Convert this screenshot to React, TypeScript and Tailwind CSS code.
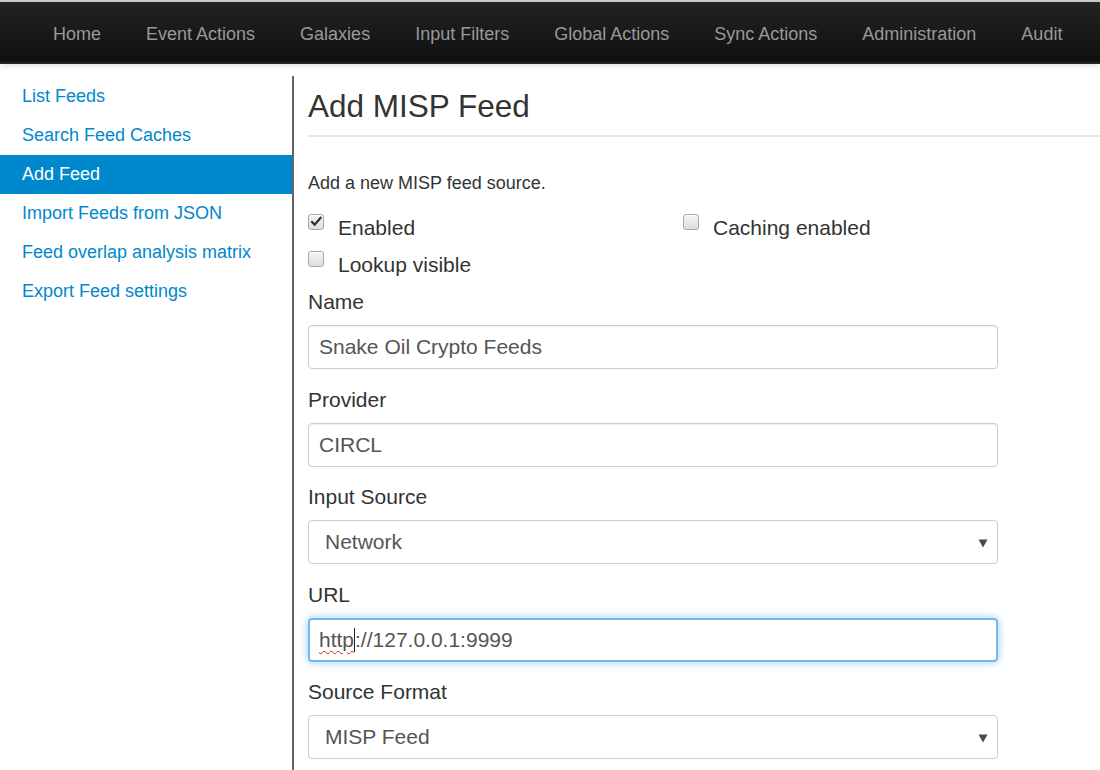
import React from "react";

const font = { fontFamily: '"Liberation Sans", Arial, Helvetica, sans-serif' };

function Checkbox({ checked }: { checked?: boolean }) {
  return (
    <div className="relative w-[16px] h-[16px] rounded-[3px] border border-[#a8a8a8] bg-gradient-to-b from-[#f4f4f4] to-[#dedede] shadow-[inset_0_1px_0_#fff] shrink-0">
      {checked && (
        <svg viewBox="0 0 16 16" className="absolute left-[1px] top-[0px] w-[13px] h-[13px]">
          <path d="M2.5 8.5 L5.8 11.8 L13 3.5" fill="none" stroke="#2b2b2b" strokeWidth="2.6" strokeLinecap="square" />
        </svg>
      )}
    </div>
  );
}

function Arrow() {
  return (
    <svg viewBox="0 0 10 9" className="absolute right-[9px] top-[18px] w-[10px] h-[9px]">
      <path d="M0.5 0.5 L9.5 0.5 L5 8.5 Z" fill="#4a4a4a" />
    </svg>
  );
}

export default function App() {
  const nav = ["Home", "Event Actions", "Galaxies", "Input Filters", "Global Actions", "Sync Actions", "Administration", "Audit"];
  const side = ["List Feeds", "Search Feed Caches", "Add Feed", "Import Feeds from JSON", "Feed overlap analysis matrix", "Export Feed settings"];
  return (
    <div style={font} className="w-[1100px] h-[770px] overflow-hidden bg-white text-[#333]">
      <div className="h-[64px] border-t-2 border-[#c8c8c8] bg-gradient-to-b from-[#232323] to-[#101010] border-b-2 border-b-[#262626] shadow-[0_2px_6px_rgba(0,0,0,0.12)] flex items-center pt-[3px] pl-[53px] gap-[45px]">
        {nav.map((n) => (
          <span key={n} className="text-[18px] text-[#999] leading-none">{n}</span>
        ))}
      </div>
      <div className="flex mt-[12px]">
        <div className="w-[292px] shrink-0 pt-[1px]">
          {side.map((s) => (
            <div
              key={s}
              className={
                "h-[39px] flex items-center pl-[22px] text-[18px] " +
                (s === "Add Feed" ? "bg-[#0088cc] text-white" : "text-[#0088cc]")
              }
            >
              {s}
            </div>
          ))}
        </div>
        <div className="flex-1 border-l-2 border-[#666] pl-[14px] h-[700px]">
          <h1 className="text-[31.5px] leading-[40px] mt-[10px] text-[#333]">Add MISP Feed</h1>
          <div className="h-[2px] bg-[#e8e8e8] mt-[9px]" />
          <p className="text-[18px] leading-[24px] mt-[34px]">Add a new MISP feed source.</p>
          <div className="flex mt-[18px]">
            <div className="w-[375px] flex gap-[14px] h-[30px]">
              <div className="mt-[1px]"><Checkbox checked /></div>
              <span className="text-[21px] leading-[30px]">Enabled</span>
            </div>
            <div className="flex gap-[14px] h-[30px]">
              <div className="mt-[1px]"><Checkbox /></div>
              <span className="text-[21px] leading-[30px]">Caching enabled</span>
            </div>
          </div>
          <div className="flex gap-[14px] h-[30px] mt-[7px]">
            <div className="mt-[1px]"><Checkbox /></div>
            <span className="text-[21px] leading-[30px]">Lookup visible</span>
          </div>

          <div className="w-[690px] mt-[7px]">
            <div className="text-[21px] leading-[30px]">Name</div>
            <div className="mt-[8px] h-[44px] rounded-[4px] border border-[#cccccc] shadow-[inset_0_1px_1px_rgba(0,0,0,0.075)] flex items-center pl-[10px] text-[21px] text-[#555]">
              Snake Oil Crypto Feeds
            </div>

            <div className="text-[21px] leading-[30px] mt-[16px]">Provider</div>
            <div className="mt-[8px] h-[44px] rounded-[4px] border border-[#cccccc] shadow-[inset_0_1px_1px_rgba(0,0,0,0.075)] flex items-center pl-[10px] text-[21px] text-[#555]">
              CIRCL
            </div>

            <div className="text-[21px] leading-[30px] mt-[15px]">Input Source</div>
            <div className="relative mt-[8px] h-[44px] rounded-[4px] border border-[#cccccc] bg-white flex items-center pl-[16px] text-[21px] text-[#555]">
              Network
              <Arrow />
            </div>

            <div className="text-[21px] leading-[30px] mt-[16px]">URL</div>
            <div className="mt-[8px] h-[44px] rounded-[4px] border-2 border-[#74b7ec] shadow-[0_0_8px_rgba(102,175,233,0.7)] flex items-center pl-[9px] text-[21px] text-[#555]">
              <span className="underline decoration-wavy decoration-[#e02020] decoration-[1px] underline-offset-[3px]">http</span>
              <span className="inline-block w-[1px] h-[24px] bg-[#222]" />
              <span>://127.0.0.1:9999</span>
            </div>

            <div className="text-[21px] leading-[30px] mt-[15px]">Source Format</div>
            <div className="relative mt-[8px] h-[44px] rounded-[4px] border border-[#cccccc] bg-white flex items-center pl-[16px] text-[21px] text-[#555]">
              MISP Feed
              <Arrow />
            </div>
          </div>
        </div>
      </div>
    </div>
  );
}
